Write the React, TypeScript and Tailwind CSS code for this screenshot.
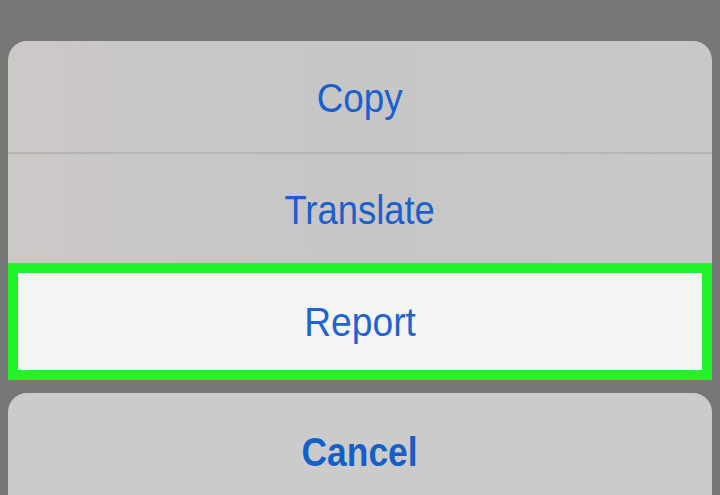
export default function App() {
  const font = { fontFamily: '"Liberation Sans", Arial, sans-serif' };
  return (
    <div
      className="relative w-[720px] h-[495px] overflow-hidden bg-[#777776] flex flex-col px-[8px] pt-[41px]"
      style={font}
    >
      <div className="shrink-0 flex flex-col rounded-t-[19px] overflow-hidden bg-gradient-to-r from-[#cbc8c6] via-[#c6c6c6] to-[#c8c8c8]">
        <div className="shrink-0 h-[111px] flex items-center justify-center pt-[2px]">
          <span className="inline-block scale-x-[0.92] text-[40px] leading-none text-[#1b5fce]">Copy</span>
        </div>
        <div className="shrink-0 h-[2px] bg-[#b4b4b4]" />
        <div className="shrink-0 h-[109px] flex items-center justify-center pt-[2px]">
          <span className="inline-block scale-x-[0.91] text-[40px] leading-none text-[#1b5fce]">Translate</span>
        </div>
        <div className="shrink-0 h-[117px] border-[10px] border-[#20f52c] bg-[#f5f5f5] flex items-center justify-center">
          <span className="inline-block scale-x-[0.93] text-[40px] leading-none text-[#1f63d6]">Report</span>
        </div>
      </div>
      <div className="mt-[13px] h-[125px] shrink-0 rounded-[19px] bg-[#cbcbcb] flex justify-center pt-[39px]">
        <span className="inline-block scale-x-[0.885] text-[40px] font-bold leading-none text-[#1560c8] h-fit">Cancel</span>
      </div>
    </div>
  );
}
